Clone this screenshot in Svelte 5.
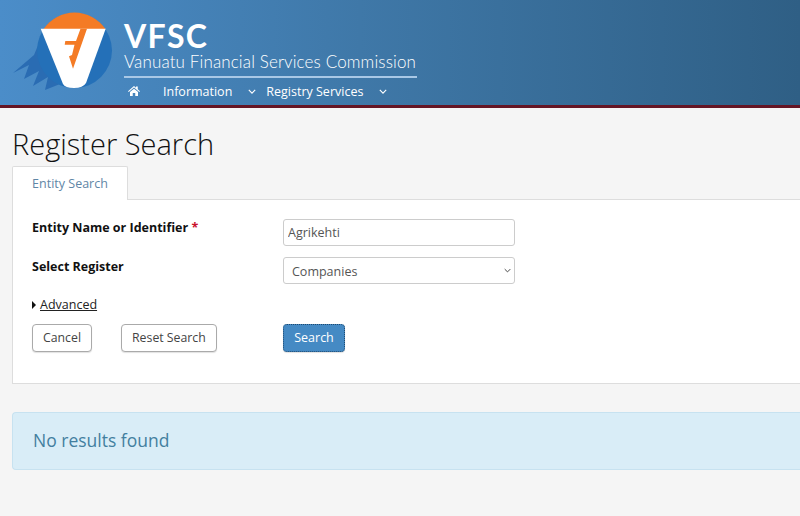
<script lang="ts">
	let name = $state('Agrikehti');
	let register = $state('Companies');
	let registers = ['Companies', 'Business Names', 'Charitable Associations'];
</script>

<header class="site-header">
	<svg class="logo" viewBox="8 8 110 88" width="110" height="88" aria-hidden="true">
		<path d="M41 38 L34 55 L13 73 L29 65 L24 79 L39 71 L33 86 L48 77 L45 90 L60 84 L60 40 Z" fill="#2a6cb3" />
		<circle cx="74.5" cy="50.5" r="37.5" fill="#2470b8" />
		<path d="M43.5 29 A37.5 37.5 0 0 1 105.5 29 Z" fill="#f47b25" />
		<path d="M40.7 28.7 H105.7 L86 83 Q83 88 74 88 Q65 88 63 84 Z" fill="#fff" />
		<path d="M80.5 28.7 H87 L73 68.7 L69 56.3 L72 55 L74.5 44.7 L64.7 44.7 L65.3 41 L76 41 Z" fill="#f47b25" />
	</svg>
	<div class="brand">
		<div class="acronym">VFSC</div>
		<div class="fullname">Vanuatu Financial Services Commission</div>
		<nav class="menu">
			<svg class="home" viewBox="0 0 24 20" width="12" height="10" aria-label="Home">
				<path d="M12 0 L16 3.5 V1 H19.5 V6.6 L24 10.6 L22.6 12 L12 3 L1.4 12 L0 10.6 Z M4 12.2 L12 5.4 L20 12.2 V20 H14.5 V14 H9.5 V20 H4 Z" fill="#fff" />
			</svg>
			<a class="first" href="#info">Information</a>
			<svg class="chev" viewBox="0 0 10 6" width="8" height="5" aria-hidden="true"><path d="M1 1 L5 5 L9 1" /></svg>
			<a class="second" href="#registry">Registry Services</a>
			<svg class="chev two" viewBox="0 0 10 6" width="8" height="5" aria-hidden="true"><path d="M1 1 L5 5 L9 1" /></svg>
		</nav>
	</div>
</header>

<main>
	<h1>Register Search</h1>
	<div class="tabs"><a class="tab" href="#entity">Entity Search</a></div>
	<section class="panel">
		<div class="fields">
			<label for="entity">Entity Name or Identifier <span class="req">*</span></label>
			<input id="entity" type="text" bind:value={name} />
			<label class="second-label" for="reg">Select Register</label>
			<div class="select-wrap">
				<select id="reg" bind:value={register}>
					{#each registers as r}
						<option>{r}</option>
					{/each}
				</select>
				<svg class="select-arrow" viewBox="0 0 10 6" width="7" height="5" aria-hidden="true"><path d="M1 1 L5 5 L9 1" /></svg>
			</div>
		</div>
		<div class="advanced"><span class="caret"></span><a href="#advanced">Advanced</a></div>
		<div class="actions">
			<div class="left">
				<button class="btn">Cancel</button>
				<button class="btn">Reset Search</button>
			</div>
			<button class="btn primary">Search</button>
		</div>
	</section>
	<div class="alert">No results found</div>
</main>

<style>
	:global(body) { background: #f5f5f5; font-family: "Open Sans", sans-serif; overflow: hidden; }
	.site-header { display: flex; height: 105px; padding-left: 8px; border-bottom: 3px solid #651524; background: linear-gradient(90deg, #4b8dc9 0%, #3f78a8 45%, #2f5f85 100%); color: #fff; }
	.logo { flex: none; margin-top: 8px; }
	.brand { width: 293px; margin-left: 6px; padding-top: 20px; }
	.acronym { font-family: Lato, sans-serif; font-size: 32px; font-weight: 700; line-height: 32px; letter-spacing: 1.4px; }
	.fullname { width: 293px; padding-bottom: 4px; border-bottom: 2px solid #a9c8e6; font-family: Lato, sans-serif; font-size: 17px; font-weight: 300; line-height: 20px; letter-spacing: .13px; white-space: nowrap; }
	.menu { display: flex; align-items: center; height: 26px; padding-left: 4px; font-size: 12.5px; }
	.menu a { color: #fff; text-decoration: none; }
	.first { margin-left: 23px; }
	.second { margin-left: 10px; }
	.chev { margin-left: 16px; }
	.chev.two { margin-left: 16px; }
	.chev path, .select-arrow path { fill: none; stroke: #fff; stroke-width: 1.4; }
	main { padding: 0 0 0 12px; }
	h1 { margin: 0; padding-top: 13px; color: #111; font-size: 29px; font-weight: 300; line-height: 45px; }
	.tabs { display: flex; height: 33px; }
	.tab { display: block; position: relative; z-index: 1; box-sizing: border-box; width: 116px; height: 34px; border: 1px solid #ddd; border-bottom: 0; border-radius: 2px 2px 0 0; background: #fff; color: #5f86a6; font-size: 12.5px; line-height: 33px; text-align: center; text-decoration: none; }
	.panel { box-sizing: border-box; height: 185px; padding: 19px 0 0 19px; border: 1px solid #ddd; border-right: 0; background: #fff; }
	.fields { display: grid; grid-template-columns: 251px 232px; grid-auto-rows: 27px; row-gap: 11px; align-items: center; }
	label { align-self: start; color: #111; font-size: 12.5px; font-weight: 700; line-height: 17px; }
	.second-label { padding-top: 1px; }
	.req { color: #c9112b; }
	input, select { box-sizing: border-box; width: 232px; height: 27px; border: 1px solid #ccc; border-radius: 3px; background: #fff; color: #555; font-family: inherit; font-size: 12.5px; }
	input { padding: 0 4px; }
	select { display: block; padding: 1px 8px 0; appearance: none; }
	.select-wrap { position: relative; height: 27px; }
	.select-arrow { position: absolute; top: 11px; right: 4px; }
	.select-arrow path { stroke: #444; }
	.advanced { display: flex; align-items: center; margin-top: 12px; font-size: 12.5px; line-height: 17px; }
	.caret { width: 0; height: 0; margin-right: 4px; border-top: 4px solid transparent; border-bottom: 4px solid transparent; border-left: 4px solid #111; }
	.advanced a { color: #222; text-decoration: underline; }
	.actions { display: flex; margin-top: 11px; }
	.left { display: flex; gap: 29px; width: 251px; }
	.btn { box-sizing: border-box; height: 28px; padding: 0 10px 2px; border: 1px solid #aaa; border-radius: 4px; background: #fff; color: #444; font-family: inherit; font-size: 12.3px; box-shadow: 0 1px 1px rgba(0,0,0,.12); }
	.primary { width: 62px; padding: 0 0 2px; border: 1px dotted #1f4a70; background: #458ac4; color: #fff; font-size: 12.5px; }
	.alert { box-sizing: border-box; height: 58px; margin-top: 28px; padding-left: 20px; border: 1px solid #c7e2f0; border-right: 0; border-radius: 4px 0 0 4px; background: #d9edf7; color: #437f9f; font-size: 17.5px; line-height: 55px; }
</style>
